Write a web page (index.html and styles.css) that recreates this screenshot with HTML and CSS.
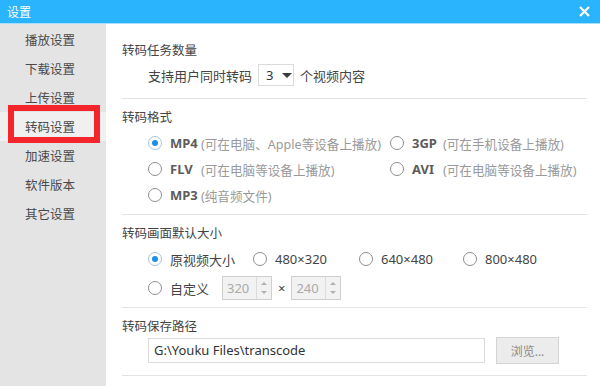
FILE: index.html
```html
<!DOCTYPE html>
<html lang="zh-CN">
<head>
    <meta charset="UTF-8">
    <title>设置</title>
    <link rel="stylesheet" href="styles.css">
</head>
<body>
    <div class="window">
        <!-- Title bar -->
        <div class="titlebar">
            <span class="title">设置</span>
            <svg class="close" width="11" height="11" viewBox="0 0 11 11">
                <path d="M1 1 L10 10 M10 1 L1 10" stroke="#ffffff" stroke-width="2.2" fill="none"/>
            </svg>
        </div>

        <div class="main">
            <!-- Sidebar -->
            <ul class="sidebar">
                <li>播放设置</li>
                <li>下载设置</li>
                <li>上传设置</li>
                <li class="active">转码设置</li>
                <li>加速设置</li>
                <li>软件版本</li>
                <li>其它设置</li>
            </ul>

            <!-- Settings content -->
            <div class="content">
                <section class="group group-count">
                    <h2>转码任务数量</h2>
                    <div class="row">
                        <span>支持用户同时转码</span>
                        <span class="select">3<i class="caret"></i></span>
                        <span>个视频内容</span>
                    </div>
                </section>

                <section class="group group-format">
                    <h2>转码格式</h2>
                    <div class="format-grid">
                        <label class="option"><i class="radio checked"></i><b>MP4</b><em>(可在电脑、Apple等设备上播放)</em></label>
                        <label class="option"><i class="radio"></i><b>3GP</b><em>(可在手机设备上播放)</em></label>
                        <label class="option"><i class="radio"></i><b>FLV</b><em>(可在电脑等设备上播放)</em></label>
                        <label class="option"><i class="radio"></i><b>AVI</b><em>(可在电脑等设备上播放)</em></label>
                        <label class="option"><i class="radio"></i><b>MP3</b><em>(纯音频文件)</em></label>
                    </div>
                </section>

                <section class="group group-size">
                    <h2>转码画面默认大小</h2>
                    <div class="size-grid">
                        <label class="option"><i class="radio checked"></i>原视频大小</label>
                        <label class="option"><i class="radio"></i>480×320</label>
                        <label class="option"><i class="radio"></i>640×480</label>
                        <label class="option"><i class="radio"></i>800×480</label>
                    </div>
                    <div class="custom-row">
                        <label class="option"><i class="radio"></i>自定义</label>
                        <span class="spin"><span class="spin-value">320</span><span class="spin-btns"><i class="up"></i><i class="down"></i></span></span>
                        <span class="times">×</span>
                        <span class="spin"><span class="spin-value">240</span><span class="spin-btns"><i class="up"></i><i class="down"></i></span></span>
                    </div>
                </section>

                <section class="group group-path">
                    <h2>转码保存路径</h2>
                    <div class="path-row">
                        <span class="path-input">G:\Youku Files\transcode</span>
                        <span class="browse">浏览...</span>
                    </div>
                </section>
            </div>
        </div>
    </div>
</body>
</html>
```

FILE: styles.css
```css
/* General */
body {
    margin: 0;
    font-family: "Noto Sans", "Noto Sans CJK SC", sans-serif;
    font-size: 13px;
    color: #444;
    background: #fff;
}
.window {
    width: 600px;
    height: 386px;
    overflow: hidden;
    display: flex;
    flex-direction: column;
}

/* Title bar */
.titlebar {
    height: 23px;
    flex-shrink: 0;
    background: #2ab4fd;
    border-bottom: 1px solid #a6defc;
    display: flex;
    align-items: center;
    justify-content: space-between;
    padding: 0 10px 0 7px;
}
.titlebar .title {
    color: #fff;
    font-size: 12px;
    font-family: "Noto Sans CJK SC", sans-serif;
}
.titlebar .close {
    display: block;
}

.main {
    flex: 1;
    display: flex;
}

/* Sidebar */
.sidebar {
    width: 106px;
    margin: 0;
    padding: 1px 0 0;
    list-style: none;
    background: #e4e4e4;
}
.sidebar li {
    height: 29px;
    line-height: 29px;
    padding-left: 25px;
    font-size: 12.5px;
    color: #4a4a4a;
    font-family: "Noto Sans CJK SC", sans-serif;
}
.sidebar li.active {
    position: relative;
    background: #f0f0f0;
}
/* red highlight frame around the active entry */
.sidebar li.active::after {
    content: "";
    position: absolute;
    left: 8px;
    top: -7px;
    width: 80px;
    height: 26px;
    border: 6px solid #f4262c;
}

/* Content */
.content {
    flex: 1;
    padding: 8px 13px 0 16px;
}
.group {
    padding-top: 8px;
    border-bottom: 1px solid #e2e2e2;
}
.group h2 {
    margin: 0;
    height: 20px;
    line-height: 20px;
    font-size: 12.5px;
    font-weight: normal;
    color: #444;
    font-family: "Noto Sans CJK SC", sans-serif;
}
.group-count { padding-bottom: 11px; }
.group-format { padding-bottom: 6px; }
.group-size { padding-bottom: 6px; }
.group-path { padding-bottom: 11px; }

.row {
    margin-top: 3px;
    padding-left: 26px;
    height: 24px;
    display: flex;
    align-items: center;
    gap: 6px;
}
.select {
    width: 36px;
    height: 22px;
    box-sizing: border-box;
    border: 1px solid #dcdcdc;
    display: flex;
    align-items: center;
    padding-left: 7px;
    gap: 9px;
    color: #333;
}
.caret {
    width: 0;
    height: 0;
    border-left: 5px solid transparent;
    border-right: 5px solid transparent;
    border-top: 5px solid #3a3a3a;
}

/* Radio options */
.option {
    display: flex;
    align-items: center;
    white-space: nowrap;
}
.radio {
    width: 14px;
    height: 14px;
    box-sizing: border-box;
    border: 1px solid #8e8e8e;
    border-radius: 50%;
    background: #fff;
    margin-right: 8px;
    flex-shrink: 0;
    position: relative;
}
.radio.checked {
    border-color: #a9c3da;
}
.radio.checked::after {
    content: "";
    position: absolute;
    left: 3px;
    top: 3px;
    width: 6px;
    height: 6px;
    border-radius: 50%;
    background: #1c8fe6;
}

.format-grid {
    margin-top: 3px;
    padding-left: 26px;
    display: grid;
    grid-template-columns: 242px auto;
    grid-auto-rows: 26px;
}
.format-grid b {
    min-width: 28px;
    font-weight: bold;
    color: #5c5c5c;
}
.format-grid em {
    font-style: normal;
    color: #9a9a9a;
    margin-left: 3px;
    font-size: 12.6px;
}

.size-grid {
    margin-top: 3px;
    padding-left: 26px;
    display: grid;
    grid-template-columns: 105px 106px 104px auto;
    height: 26px;
    align-items: center;
}
.custom-row {
    margin-top: 3px;
    padding-left: 26px;
    height: 26px;
    display: flex;
    align-items: center;
}
.custom-row .option {
    width: 74px;
}
.spin {
    width: 50px;
    height: 24px;
    box-sizing: border-box;
    border: 1px solid #cfcfcf;
    background: #f2f2f2;
    display: flex;
}
.spin-value {
    flex: 1;
    padding-left: 4px;
    line-height: 22px;
    color: #aaa;
}
.spin-btns {
    width: 14px;
    border-left: 1px solid #dcdcdc;
    display: flex;
    flex-direction: column;
    align-items: center;
    justify-content: space-around;
    padding: 2px 0;
}
.spin-btns .up,
.spin-btns .down {
    width: 0;
    height: 0;
    border-left: 3px solid transparent;
    border-right: 3px solid transparent;
}
.spin-btns .up { border-bottom: 3px solid #b0b0b0; }
.spin-btns .down { border-top: 3px solid #b0b0b0; }
.times {
    margin: 0 6px;
    color: #444;
}

/* Save path */
.path-row {
    margin-top: 1px;
    padding-left: 26px;
    display: flex;
    align-items: center;
    height: 27px;
}
.path-input {
    width: 337px;
    height: 25px;
    box-sizing: border-box;
    border: 1px solid #dcdcdc;
    padding-left: 5px;
    line-height: 23px;
    color: #333;
}
.browse {
    margin-left: 11px;
    width: 63px;
    height: 27px;
    box-sizing: border-box;
    border: 1px solid #d4d4d4;
    background: #ececec;
    color: #8a8a8a;
    font-size: 12px;
    display: flex;
    align-items: center;
    justify-content: center;
}
```
